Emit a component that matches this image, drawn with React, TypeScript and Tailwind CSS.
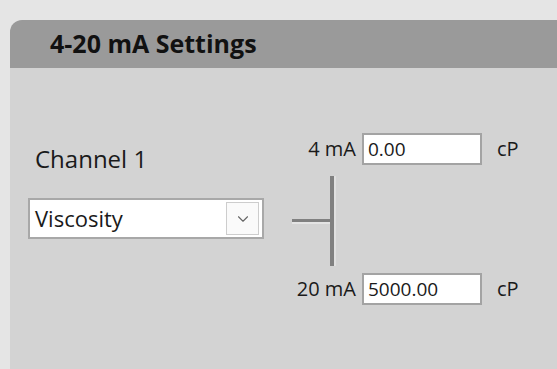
import React from 'react';
import { ChevronDown } from 'lucide-react';

const font = { fontFamily: '"Open Sans", "Noto Sans", sans-serif' };

function RangeRow({ label, value }: { label: string; value: string }) {
  return (
    <div className="flex items-center h-[32px]">
      <div className="w-[64px] text-right text-[20px] leading-none text-[#1a1a1a]">{label}</div>
      <div className="ml-[6px] w-[120px] h-[32px] border-2 border-[#a3a3a3] bg-white flex items-center pl-[4px] text-[19px] text-[#1a1a1a]">
        {value}
      </div>
      <div className="ml-[15px] text-[20px] leading-none text-[#1a1a1a]">cP</div>
    </div>
  );
}

export default function App() {
  return (
    <div className="w-[557px] h-[369px] bg-[#e5e5e5] pt-[20px] pl-[10px] overflow-hidden" style={font}>
      <div className="h-full flex flex-col rounded-tl-[12px] overflow-hidden">
        {/* Header */}
        <div className="h-[48px] shrink-0 bg-[#9a9a9a] flex items-center pl-[40px] text-[25px] font-bold text-[#111]">
          4-20 mA Settings
        </div>

        {/* Body */}
        <div className="flex-1 bg-[#d3d3d3] flex items-start pl-[18px]">
          {/* Channel selection */}
          <div className="w-[236px] mt-[75px] flex flex-col">
            <div className="pl-[7px] text-[24px] leading-[32px] text-[#1a1a1a]">Channel 1</div>
            <div className="mt-[23px] h-[41px] border-2 border-[#a8a8a8] bg-white flex items-center justify-between pl-[5px] pr-[3px]">
              <span className="text-[22px] text-[#1a1a1a]">Viscosity</span>
              <div className="w-[33px] h-[33px] border border-[#cdcdcd] bg-[#fafafa] flex items-center justify-center">
                <ChevronDown size={18} strokeWidth={1.5} className="text-[#666]" />
              </div>
            </div>
          </div>

          {/* Range mapping */}
          <div className="ml-[28px] mt-[65px] flex flex-col">
            <RangeRow label="4 mA" value="0.00" />
            <div className="mt-[11px] flex items-center h-[90px]">
              <div className="w-[38px] h-[5px] border-t-[3px] border-[#808080] bg-[#e4e4e4]" />
              <div className="h-full w-[6px] border-l-[4px] border-[#808080] bg-[#e0e0e0]" />
            </div>
            <div className="mt-[7px]">
              <RangeRow label="20 mA" value="5000.00" />
            </div>
          </div>
        </div>
      </div>
    </div>
  );
}
